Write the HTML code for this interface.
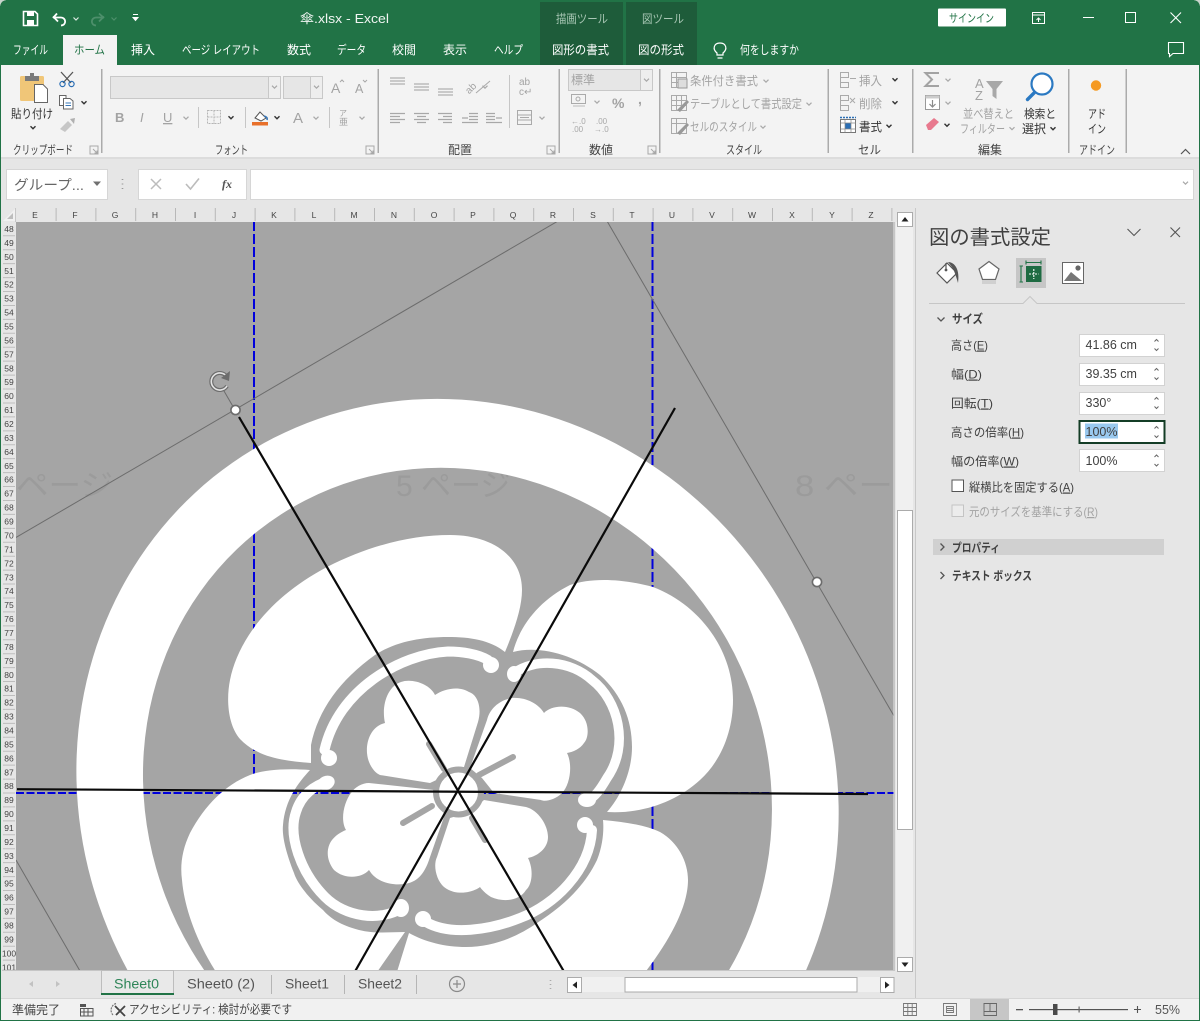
<!DOCTYPE html>
<html lang="ja"><head><meta charset="utf-8"><title>傘.xlsx - Excel</title>
<style>
html,body{margin:0;padding:0;background:#e6e6e6;width:1200px;height:1021px;overflow:hidden}
svg{display:block;font-family:"Liberation Sans","Noto Sans CJK JP",sans-serif}
.tw{fill:#fff;font-size:12px}
.td{fill:#333;font-size:12px}
.tg{fill:#a3a3a3;font-size:12px}
.gl{fill:#444;font-size:12px}
.hd{fill:#444;font-size:8.5px}
.pn{fill:#404040;font-size:12px}
.st{fill:#555;font-size:13px}
.ln{fill:none;stroke:#a8a8a8;stroke-width:1.3}
.ld{fill:none;stroke:#555;stroke-width:1.3}
</style></head><body>
<svg width="1200" height="1021" viewBox="0 0 1200 1021" xmlns="http://www.w3.org/2000/svg">
<defs>
<path id="vg" d="M-2.5,-1.3 L0,1.2 L2.5,-1.3" fill="none" stroke="#a8a8a8" stroke-width="1.2"/>
<path id="vd" d="M-2.5,-1.3 L0,1.2 L2.5,-1.3" fill="none" stroke="#333" stroke-width="1.4"/>
<path id="sp" d="M-2,-3.5 L0,-5.5 L2,-3.5 M-2,3.5 L0,5.5 L2,3.5" fill="none" stroke="#666" stroke-width="1"/>
<path id="lnc" d="M0,0 L15,0 M0,3 L15,3 M0,6 L15,6" fill="none" stroke="#b0b0b0" stroke-width="1.2"/>
<clipPath id="cv"><rect x="16" y="222" width="877.5" height="748"/></clipPath>
<path id="dl" d="M0,0 H8 V8 H0 Z M3,3 L7,7 M7,4.5 V7 H4.5" fill="none" stroke="#a8a8a8" stroke-width="1"/>
</defs>

<!-- window -->
<rect width="1200" height="1021" fill="#217346"/>
<rect x="0" y="0" width="6" height="6" fill="#c8d4cc"/><path d="M0,8 Q0,0 8,0 H12 V12 H0 Z" fill="#217346"/>
<rect x="1194" y="0" width="6" height="6" fill="#c8d4cc"/><path d="M1200,8 Q1200,0 1192,0 H1188 V12 H1200 Z" fill="#217346"/>
<rect x="1" y="65" width="1198" height="955" fill="#e6e6e6"/>

<!-- contextual tabs -->
<rect x="540" y="2" width="83" height="63" fill="#1e5c3a"/>
<rect x="626" y="2" width="71" height="63" fill="#1e5c3a"/>
<text x="556" y="23" textLength="52" lengthAdjust="spacingAndGlyphs" style="font-size:12px;fill:#a9c7b5">描画ツール</text>
<text x="642" y="23" textLength="42" lengthAdjust="spacingAndGlyphs" style="font-size:12px;fill:#a9c7b5">図ツール</text>

<!-- QAT -->
<path d="M23.5,11.5 H35 L37.5,14 V25.5 H23.5 Z" fill="none" stroke="#fff" stroke-width="1.6"/>
<rect x="27" y="11.5" width="7" height="4.5" fill="#fff"/><rect x="27" y="20" width="7" height="5" fill="#fff"/>
<path d="M53,18 L57,13.5 M53,17.5 H61 C66,17.5 67,25 61,25.5" fill="none" stroke="#fff" stroke-width="1.8"/>
<path d="M53,16.5 L58,21.5" fill="none" stroke="#fff" stroke-width="1.8"/>
<path d="M73.5,17.5 L76,20 L78.5,17.5" fill="none" stroke="#dbe8e0" stroke-width="1.2"/>
<path d="M104,18 L99,13.5 M104,17.5 H96 C91,17.5 90,25 96,25.5 M104,16.5 L99,21.5" fill="none" stroke="#4d8f6b" stroke-width="1.8"/>
<path d="M111.5,17.5 L114,20 L116.5,17.5" fill="none" stroke="#4d8f6b" stroke-width="1.2"/>
<path d="M133,14.5 H138 M133,17.5 H138 L135.5,20.5 Z" fill="#fff" stroke="#fff" stroke-width="1"/>
<text x="300" y="23" textLength="89" lengthAdjust="spacingAndGlyphs" style="font-size:12.5px;fill:#f0f5f2">傘.xlsx  -  Excel</text>

<!-- window controls -->
<rect x="938" y="8.5" width="68" height="18" rx="1" fill="#fff"/>
<text x="949" y="22" textLength="45" lengthAdjust="spacingAndGlyphs" style="font-size:11.5px;fill:#217346">サインイン</text>
<path d="M1032.5,12.5 H1044.5 V23.5 H1032.5 Z M1032.5,15 H1044.5 M1038.5,22 V18 M1036.5,20 L1038.5,18 L1040.5,20" fill="none" stroke="#fff" stroke-width="1"/>
<rect x="1083" y="17" width="11" height="1" fill="#fff"/>
<rect x="1125.5" y="12.5" width="10" height="10" fill="none" stroke="#fff" stroke-width="1"/>
<path d="M1170.5,12.5 L1181,23 M1181,12.5 L1170.5,23" fill="none" stroke="#fff" stroke-width="1.1"/>

<!-- tab labels -->
<rect x="63" y="35" width="54" height="30" fill="#f3f3f3"/>
<text x="13" y="54" textLength="35" lengthAdjust="spacingAndGlyphs" class="tw">ファイル</text>
<text x="74" y="54" textLength="31" lengthAdjust="spacingAndGlyphs" style="font-size:12px;fill:#217346">ホーム</text>
<text x="131" y="54" textLength="24" lengthAdjust="spacingAndGlyphs" class="tw">挿入</text>
<text x="182" y="54" textLength="78" lengthAdjust="spacingAndGlyphs" class="tw">ページ レイアウト</text>
<text x="287" y="54" textLength="24" lengthAdjust="spacingAndGlyphs" class="tw">数式</text>
<text x="337" y="54" textLength="29" lengthAdjust="spacingAndGlyphs" class="tw">データ</text>
<text x="392" y="54" textLength="24" lengthAdjust="spacingAndGlyphs" class="tw">校閲</text>
<text x="443" y="54" textLength="24" lengthAdjust="spacingAndGlyphs" class="tw">表示</text>
<text x="494" y="54" textLength="29" lengthAdjust="spacingAndGlyphs" class="tw">ヘルプ</text>
<text x="552" y="54" textLength="57" lengthAdjust="spacingAndGlyphs" class="tw">図形の書式</text>
<text x="638" y="54" textLength="46" lengthAdjust="spacingAndGlyphs" class="tw">図の形式</text>
<path d="M717,53 C712,49 714,43 720,43 C726,43 728,49 723,53 V55 H717 Z M717.5,58 H722.5" fill="none" stroke="#fff" stroke-width="1.2"/>
<text x="740" y="54" textLength="59" lengthAdjust="spacingAndGlyphs" class="tw">何をしますか</text>
<path d="M1168.5,42.5 H1183.5 V53.5 H1173 L1169.5,56.5 V53.5 H1168.5 Z" fill="none" stroke="#fff" stroke-width="1.1"/>

<!-- ribbon -->
<rect x="1" y="65" width="1198" height="92" fill="#f3f3f3"/>
<rect x="1" y="157" width="1198" height="2" fill="#dcdcdc"/>
<g fill="#ababab">
<rect x="101" y="69" width="1.5" height="84"/><rect x="377.5" y="69" width="1.5" height="84"/><rect x="558.5" y="69" width="1.5" height="84"/><rect x="659" y="69" width="1.5" height="84"/><rect x="827.5" y="69" width="1.5" height="84"/><rect x="912" y="69" width="1.5" height="84"/><rect x="1068" y="69" width="1.5" height="84"/><rect x="1125.5" y="69" width="1.5" height="84"/>
</g>
<!-- clipboard group -->
<rect x="20" y="76" width="24" height="25" rx="1.5" fill="#f0c678"/>
<rect x="25" y="76" width="14" height="5" fill="#7a7a7a"/><rect x="30" y="73" width="4" height="4" fill="#7a7a7a"/>
<path d="M34.5,84.5 H43 L47.5,89 V102.5 H34.5 Z" fill="#fff" stroke="#666" stroke-width="1"/>
<text x="11" y="118" textLength="42" lengthAdjust="spacingAndGlyphs" class="td">貼り付け</text>
<use href="#vd" x="33" y="127.5"/>
<path d="M61,72 L71,83 M73,72 L63,83" stroke="#555" stroke-width="1.3" fill="none"/>
<circle cx="62.5" cy="84" r="2.6" fill="none" stroke="#2b6fb5" stroke-width="1.2"/><circle cx="71.5" cy="84" r="2.6" fill="none" stroke="#2b6fb5" stroke-width="1.2"/>
<path d="M59.5,95.5 H66 V105.5 H59.5 Z" fill="#fff" stroke="#666"/><path d="M63.5,98.5 H70 L73,101 V109 H63.5 Z" fill="#fff" stroke="#666"/>
<path d="M65.5,103 H71 M65.5,105.5 H71" stroke="#3a78b8"/>
<use href="#vd" x="84" y="102.5"/>
<path d="M60,129 L68,121 L72,125 L65,132 Z" fill="#c6c6c6"/><path d="M70,119 L75,118 L74,124 Z" fill="#b0b0b0"/>
<text x="13" y="154" textLength="60" lengthAdjust="spacingAndGlyphs" class="gl">クリップボード</text>
<use href="#dl" x="90" y="146"/>
<!-- font group -->
<rect x="110.5" y="76.5" width="170" height="22" fill="#e6e6e6" stroke="#c8c8c8"/>
<rect x="268.5" y="76.5" width="12" height="22" fill="#eee" stroke="#c8c8c8"/>
<use href="#vg" x="274.5" y="87"/>
<rect x="283.5" y="76.5" width="39" height="22" fill="#e6e6e6" stroke="#c8c8c8"/>
<rect x="310.5" y="76.5" width="12" height="22" fill="#eee" stroke="#c8c8c8"/>
<use href="#vg" x="316.5" y="87"/>
<g class="tg" style="font-size:13px;fill:#a3a3a3">
<text x="331" y="93" style="font-size:14px">A</text><text x="355" y="93" style="font-size:12.5px">A</text>
<text x="115" y="122" style="font-weight:bold">B</text><text x="140" y="122" style="font-style:italic">I</text><text x="163" y="122" style="text-decoration:underline">U</text>
<text x="293" y="123" style="font-size:15px">A</text>
</g>
<path d="M340,82 L342,80 L344,82 M363,80 L365,82 L367,80" fill="none" stroke="#a8a8a8"/>
<use href="#vg" x="186" y="118"/>
<rect x="198" y="107" width="1" height="21" fill="#c6c6c6"/>
<path d="M207.5,110.5 H220.5 V123.5 H207.5 Z M214,110.5 V123.5 M207.5,117 H220.5" fill="none" stroke="#b5b5b5" stroke-dasharray="2 1"/>
<use href="#vd" x="231" y="117.5"/>
<rect x="245" y="107" width="1" height="21" fill="#c6c6c6"/>
<path d="M255,118 L260,112 L266,118 L261,121 Z" fill="#fff" stroke="#555"/><path d="M264,116 Q268,117 267,120" fill="none" stroke="#3a78b8" stroke-width="1.6"/>
<rect x="252" y="122" width="16" height="3.5" fill="#e8702a"/>
<use href="#vd" x="277" y="117.5"/>
<use href="#vg" x="316" y="118"/>
<rect x="329" y="107" width="1" height="21" fill="#c6c6c6"/>
<text x="339" y="116" style="font-size:8px;fill:#a3a3a3">ア</text><text x="339" y="125" style="font-size:9px;fill:#a3a3a3">亜</text>
<use href="#vg" x="362" y="118"/>
<!-- align group -->
<use href="#lnc" x="390" y="78"/><use href="#lnc" x="414" y="84"/><use href="#lnc" x="438" y="89"/>
<text x="464" y="90" transform="rotate(-45 472 86)" style="font-size:10px;fill:#a3a3a3">ab</text>
<path d="M476,93 L490,81" stroke="#a8a8a8" fill="none"/>
<use href="#vg" x="485" y="87"/>
<rect x="509" y="75" width="1" height="53" fill="#c6c6c6"/>
<text x="519" y="85" style="font-size:10px;fill:#a3a3a3">ab</text><text x="519" y="95" style="font-size:10px;fill:#a3a3a3">c↵</text>
<path d="M390,113.5 H405 M390,116.5 H400 M390,119.5 H405 M390,122.5 H400 M414,113.5 H429 M417,116.5 H426 M414,119.5 H429 M417,122.5 H426 M438,113.5 H452 M443,116.5 H452 M438,119.5 H452 M443,122.5 H452 M469,113.5 H478 M469,116.5 H478 M469,119.5 H478 M462,122.5 H478 M462,118 H468 M486,113.5 H495 M486,116.5 H495 M486,119.5 H495 M486,122.5 H502 M496,118 H502" class="ln"/>
<rect x="517.5" y="110.5" width="14" height="14" fill="none" stroke="#aaa"/><path d="M517.5,115 H531.5 M517.5,120 H531.5 M520,117.5 H529" stroke="#aaa" fill="none"/>
<use href="#vg" x="542" y="118"/>
<text x="448" y="154" textLength="24" lengthAdjust="spacingAndGlyphs" class="gl">配置</text>
<text x="215" y="154" textLength="33" lengthAdjust="spacingAndGlyphs" class="gl">フォント</text>
<use href="#dl" x="366" y="146"/><use href="#dl" x="547" y="146"/>
<!-- number group -->
<rect x="568.5" y="69.5" width="84" height="21" fill="#e6e6e6" stroke="#c8c8c8"/>
<rect x="640.5" y="69.5" width="12" height="21" fill="#eee" stroke="#c8c8c8"/>
<use href="#vg" x="646.5" y="80"/>
<text x="571" y="84" textLength="24" lengthAdjust="spacingAndGlyphs" class="tg">標準</text>
<rect x="571.5" y="94.5" width="14" height="9" fill="none" stroke="#aaa"/><circle cx="578" cy="99" r="2" fill="none" stroke="#aaa"/><path d="M573,106 H585" stroke="#bbb"/>
<use href="#vg" x="597" y="102"/>
<text x="612" y="108" style="font-size:14px;font-weight:bold;fill:#a3a3a3">%</text>
<text x="638" y="104" style="font-size:14px;font-weight:bold;fill:#a3a3a3">,</text>
<text x="571" y="124" style="font-size:8px;fill:#a8a8a8">←.0</text><text x="572" y="132" style="font-size:8px;fill:#a8a8a8">.00</text>
<text x="596" y="124" style="font-size:8px;fill:#a8a8a8">.00</text><text x="594" y="132" style="font-size:8px;fill:#a8a8a8">→.0</text>
<text x="589" y="154" textLength="24" lengthAdjust="spacingAndGlyphs" class="gl">数値</text>
<use href="#dl" x="648" y="146"/>
<!-- styles group -->
<g fill="none" stroke="#aaa">
<rect x="671.5" y="72.5" width="15" height="15"/><path d="M671.5,77.5 H686.5 M671.5,82.5 H680 M676.5,72.5 V87.5"/>
<rect x="671.5" y="95.5" width="15" height="15"/><path d="M671.5,100.5 H686.5 M671.5,105.5 H686.5 M676.5,95.5 V110.5 M681.5,95.5 V110.5"/>
<rect x="671.5" y="118.5" width="15" height="15"/><path d="M671.5,123.5 H686.5 M676.5,118.5 V133.5"/>
</g>
<rect x="678" y="79" width="9" height="9" fill="#ddd" stroke="#999"/>
<path d="M677,110 L687,100 L689,102 L680,112 Z M677,133 L687,123 L689,125 L680,135 Z" fill="#999"/>
<text x="690" y="85" textLength="68" lengthAdjust="spacingAndGlyphs" class="tg">条件付き書式</text><use href="#vg" x="766" y="81"/>
<text x="690" y="108" textLength="112" lengthAdjust="spacingAndGlyphs" class="tg">テーブルとして書式設定</text><use href="#vg" x="809" y="104"/>
<text x="690" y="131" textLength="67" lengthAdjust="spacingAndGlyphs" class="tg">セルのスタイル</text><use href="#vg" x="763" y="127"/>
<text x="726" y="154" textLength="36" lengthAdjust="spacingAndGlyphs" class="gl">スタイル</text>
<!-- cells group -->
<g fill="none" stroke="#aaa">
<path d="M840.5,72.5 H848.5 V77.5 H840.5 Z M840.5,77.5 V87.5 H848.5 V82.5 H840.5 M850,78.5 H856"/>
<path d="M840.5,95.5 H848.5 V100.5 H840.5 Z M840.5,105.5 H848.5 V110.5 H840.5 Z M840.5,100.5 V105.5 M850,98 L855,103 M855,98 L850,103"/>
</g>
<rect x="840.5" y="119.5" width="15" height="13" fill="#fff" stroke="#777"/><path d="M840,117.5 H856" stroke="#2b6fb5" stroke-dasharray="2 1" stroke-width="1.4"/>
<rect x="845" y="123" width="6" height="6" fill="#2b6fb5"/>
<path d="M840.5,123 H856 M840.5,129 H856 M845,119.5 V132.5 M851,119.5 V132.5" stroke="#888" fill="none" stroke-width=".7"/>
<text x="859" y="85" textLength="23" lengthAdjust="spacingAndGlyphs" class="tg">挿入</text><use href="#vd" x="895" y="79.5"/>
<text x="859" y="108" textLength="23" lengthAdjust="spacingAndGlyphs" class="tg">削除</text><use href="#vd" x="895" y="102.5"/>
<text x="859" y="131" textLength="23" lengthAdjust="spacingAndGlyphs" class="td">書式</text><use href="#vd" x="889" y="126"/>
<text x="858" y="154" textLength="23" lengthAdjust="spacingAndGlyphs" class="gl">セル</text>
<!-- editing group -->
<path d="M939,73 H925.5 L932,79.5 L925.5,86 H939" fill="none" stroke="#a3a3a3" stroke-width="2"/>
<use href="#vg" x="948" y="80"/>
<rect x="925.5" y="95.5" width="14" height="14" fill="#fff" stroke="#999"/><rect x="925.5" y="95.5" width="14" height="3" fill="#ccc"/>
<path d="M932.5,100 V107 M929.5,104 L932.5,107 L935.5,104" fill="none" stroke="#8a8a8a" stroke-width="1.2"/>
<use href="#vg" x="948" y="103"/>
<path d="M926,125 L934,118 L939,122 L931,130 L928,130 Z" fill="#e8798e"/>
<use href="#vd" x="947" y="125"/>
<text x="975" y="88" style="font-size:13px;fill:#a3a3a3">A</text><text x="975" y="100" style="font-size:13px;fill:#a3a3a3">Z</text>
<path d="M986,81 H1003 L996.5,89 V99 L992.5,96 V89 Z" fill="#a8a8a8"/>
<text x="963" y="118" textLength="51" lengthAdjust="spacingAndGlyphs" class="tg">並べ替えと</text>
<text x="960" y="133" textLength="45" lengthAdjust="spacingAndGlyphs" class="tg">フィルター</text><use href="#vg" x="1012" y="128.5"/>
<circle cx="1042" cy="84" r="10.5" fill="#fff" stroke="#2b79c2" stroke-width="2.2"/>
<path d="M1034,93 L1027.5,99.5" stroke="#2b79c2" stroke-width="3.4" stroke-linecap="round"/>
<text x="1024" y="118" textLength="32" lengthAdjust="spacingAndGlyphs" class="td">検索と</text>
<text x="1022" y="133" textLength="24" lengthAdjust="spacingAndGlyphs" class="td">選択</text><use href="#vd" x="1053" y="128.5"/>
<text x="978" y="154" textLength="24" lengthAdjust="spacingAndGlyphs" class="gl">編集</text>
<!-- addin -->
<circle cx="1096" cy="85.5" r="5.2" fill="#f59a23"/>
<text x="1088" y="118" textLength="18" lengthAdjust="spacingAndGlyphs" class="td">アド</text>
<text x="1088" y="133" textLength="18" lengthAdjust="spacingAndGlyphs" class="td">イン</text>
<text x="1079" y="154" textLength="36" lengthAdjust="spacingAndGlyphs" class="gl">アドイン</text>
<path d="M1181,154 L1185.5,149.5 L1190,154" fill="none" stroke="#555" stroke-width="1.2"/>

<!-- formula bar -->
<rect x="6.5" y="169.5" width="101" height="30" fill="#fff" stroke="#d6d6d6"/>
<text x="14" y="190" textLength="70" lengthAdjust="spacingAndGlyphs" style="font-size:14px;fill:#666">グループ...</text>
<path d="M93,181.5 H101 L97,186 Z" fill="#707070"/>
<path d="M122.5,179 V180 M122.5,183.5 V184.5 M122.5,188 V189" stroke="#999" stroke-width="1.6"/>
<rect x="138.5" y="169.5" width="108" height="30" fill="#fff" stroke="#d6d6d6"/>
<path d="M151,179 L161,189 M161,179 L151,189" stroke="#bcbcbc" stroke-width="1.5" fill="none"/>
<path d="M186,184 L190.5,189 L199,178.5" stroke="#bcbcbc" stroke-width="1.6" fill="none"/>
<text x="222" y="188" style="font-family:'Liberation Serif',serif;font-style:italic;font-weight:bold;font-size:12px;fill:#555">fx</text>
<rect x="250.5" y="169.5" width="943" height="30" fill="#fff" stroke="#d6d6d6"/>
<use href="#vg" x="1185.5" y="183"/>

<!-- column headers -->
<rect x="2" y="208" width="892" height="14" fill="#e6e6e6"/>
<path d="M15,209 V221 H3 Z" fill="#f1f1f1"/><path d="M13,213 V219 H7 Z" fill="#bdbdbd"/>
<path d="M15.5,208 V222" stroke="#c6c6c6"/>
<line x1="55.6" y1="214.5" x2="894" y2="214.5" stroke="#b8b8b8" stroke-width="13" stroke-dasharray="1 38.8"/>
<g class="hd" text-anchor="middle">
<text x="35" y="218">E</text><text x="75" y="218">F</text><text x="115" y="218">G</text><text x="155" y="218">H</text><text x="195" y="218">I</text><text x="234" y="218">J</text><text x="274" y="218">K</text><text x="314" y="218">L</text><text x="354" y="218">M</text><text x="394" y="218">N</text><text x="434" y="218">O</text><text x="473" y="218">P</text><text x="513" y="218">Q</text><text x="553" y="218">R</text><text x="593" y="218">S</text><text x="632" y="218">T</text><text x="672" y="218">U</text><text x="712" y="218">V</text><text x="752" y="218">W</text><text x="792" y="218">X</text><text x="832" y="218">Y</text><text x="871" y="218">Z</text>
</g>

<!-- row headers -->
<rect x="2" y="222" width="14" height="750" fill="#e6e6e6"/>
<line x1="9" y1="235.3" x2="9" y2="972" stroke="#bdbdbd" stroke-width="12" stroke-dasharray="1 12.93"/>
<g class="hd" text-anchor="middle">
<text x="9" y="232">48</text><text x="9" y="245.9">49</text><text x="9" y="259.9">50</text><text x="9" y="273.8">51</text><text x="9" y="287.7">52</text><text x="9" y="301.7">53</text><text x="9" y="315.6">54</text><text x="9" y="329.5">55</text><text x="9" y="343.4">56</text><text x="9" y="357.4">57</text><text x="9" y="371.3">58</text><text x="9" y="385.2">59</text><text x="9" y="399.2">60</text><text x="9" y="413.1">61</text><text x="9" y="427">62</text><text x="9" y="441">63</text><text x="9" y="454.9">64</text><text x="9" y="468.8">65</text><text x="9" y="482.7">66</text><text x="9" y="496.7">67</text><text x="9" y="510.6">68</text><text x="9" y="524.5">69</text><text x="9" y="538.5">70</text><text x="9" y="552.4">71</text><text x="9" y="566.3">72</text><text x="9" y="580.3">73</text><text x="9" y="594.2">74</text><text x="9" y="608.1">75</text><text x="9" y="622">76</text><text x="9" y="636">77</text><text x="9" y="649.9">78</text><text x="9" y="663.8">79</text><text x="9" y="677.8">80</text><text x="9" y="691.7">81</text><text x="9" y="705.6">82</text><text x="9" y="719.6">83</text><text x="9" y="733.5">84</text><text x="9" y="747.4">85</text><text x="9" y="761.3">86</text><text x="9" y="775.3">87</text><text x="9" y="789.2">88</text><text x="9" y="803.1">89</text><text x="9" y="817.1">90</text><text x="9" y="831">91</text><text x="9" y="844.9">92</text><text x="9" y="858.9">93</text><text x="9" y="872.8">94</text><text x="9" y="886.7">95</text><text x="9" y="900.6">96</text><text x="9" y="914.6">97</text><text x="9" y="928.5">98</text><text x="9" y="942.4">99</text><text x="9" y="956.4">100</text><text x="9" y="970.3">101</text>
</g>

<!-- canvas -->
<g clip-path="url(#cv)">
<rect x="16" y="222" width="878" height="748" fill="#a5a5a5"/>
<g style="font-size:30px;fill:#9b9b9b">
<text x="16" y="496" textLength="97" lengthAdjust="spacingAndGlyphs">ページ</text><text x="396" y="496">5 ページ</text><text x="795" y="496" textLength="98" lengthAdjust="spacingAndGlyphs">8 ペー</text>
</g>
<g fill="none" stroke="#0000dc" stroke-width="2">
<path d="M254,221 V780" stroke-dasharray="10 3"/>
<path d="M652.5,221 V975" stroke-dasharray="10 3"/>
<path d="M16,793 H894" stroke-dasharray="8 2.5"/>
</g>
<!-- ring -->
<path fill="#fff" fill-rule="evenodd" d="M130.2,975 A375,399 -30 1 1 803.9,975 L726.1,975 A309.5,329 -30 1 0 207.6,975 Z"/>
<!-- big petals -->
<g fill="#fff">
<path d="M311,763 C285,761 258,758 240,739 C228,725 226,700 230,680 C238,640 270,597 327,567 C370,545 412,535 450,535 C492,535 522,556 522,590 C522,610 512,635 505,652 C490,640 470,637 448,637 C420,637 395,642 375,655 C340,680 318,710 311,745 Z"/>
<path d="M513,652 C520,625 540,600 570,585 C590,578 620,578 653,587 C700,605 733,650 733,700 C733,730 722,760 700,780 C675,803 640,814 607,812 C622,795 632,770 632,747 C632,720 622,695 600,675 C575,655 540,645 513,652 Z"/>
<path d="M603,820 C625,822 645,825 660,832 C678,842 688,862 688,880 C688,905 672,938 643,975 L396,975 L409,933 C425,942 445,947 466,947 C495,947 520,935 537,923 C565,905 585,885 597,860 C603,845 604,830 603,820 Z"/>
<path d="M310,770 C285,768 262,770 250,775 C225,785 205,805 190,833 C182,850 180,865 182,880 C184,905 195,940 218,975 L375,975 L405,932 C390,932 375,934 359,930 C340,925 330,918 323,910 C305,895 296,880 294,873 C285,850 282,835 283,825 C285,800 298,783 310,770 Z"/>
</g>
<!-- arcs -->
<g fill="none" stroke="#fff" stroke-width="10" stroke-linecap="round">
<path d="M488,660 C478,654 462,651.5 448,651.5 C400,654 338,690 324.5,750"/>
<path d="M514,673 C535,658 570,660 592,680 C618,700 630,745 607,778 C600,790 595,797 587,801" stroke-width="9.5"/>
<path d="M592,830 C590,870 555,905 520,918 C490,930 450,936 426,922"/>
<path d="M402,908 C380,922 345,917 325,897 C300,872 288,835 296,812 C301,795 315,785 327,782"/>
</g>
<g fill="#fff"><circle cx="491" cy="665" r="8"/><circle cx="329" cy="758" r="8"/><ellipse cx="514" cy="674" rx="7" ry="8"/><ellipse cx="587" cy="800" rx="9" ry="7"/><circle cx="585" cy="825" r="8"/><circle cx="423" cy="919" r="8"/><ellipse cx="401" cy="908" rx="8" ry="9"/><ellipse cx="326" cy="783" rx="9" ry="7" transform="rotate(-25 326 783)"/></g>
<!-- flower -->
<g fill="#fff">
<path d="M464,767 L478,722 C482,708 478,695 469,692 C460,686 445,688 435,695 C430,684 412,678 401,682 C388,686 381,705 385,723 C372,726 366,740 367,753 C368,765 375,773 380,775 L430,783 L445,776 Z"/>
<path d="M470,768 L487,720 C490,708 500,700 512,698 C525,697 538,703 544,713 C550,706 568,703 580,713 C590,722 589,738 584,743 C580,749 573,752 567,753 C573,765 570,785 562,793 C555,800 545,802 541,800 L494,793 L482,778 Z"/>
<path d="M484,800 L526,807 C538,810 548,825 548,837 C548,848 538,856 528,858 C534,870 532,885 526,890 C520,900 505,903 491,897 C486,894 482,890 480,887 C472,893 455,896 444,887 C436,880 433,865 437,857 L450,818 L470,812 Z"/>
<path d="M444,817 L430,857 C426,870 420,880 409,883 C398,886 378,885 369,870 C362,878 345,880 334,870 C326,860 326,848 332,840 C336,835 341,832 346,830 C340,820 344,802 351,793 C355,787 362,783 369,783 L434,790 L445,805 Z"/>
</g>
<g fill="none" stroke="#a5a5a5" stroke-width="6" stroke-linecap="round">
<path d="M429,744 L444,769"/><path d="M479,775 L513,757"/><path d="M472,818 L485,840"/><path d="M403,823 L432,806"/>
</g>
<circle cx="458.5" cy="792" r="22.5" fill="#fff" stroke="#a5a5a5" stroke-width="6"/>
<!-- black lines -->
<g fill="none" stroke="#0a0a0a" stroke-width="2.2">
<path d="M239,417 L566,975"/><path d="M675,408 L353,975"/><path d="M17,789.2 L868,794"/>
</g>
<!-- selection -->
<g fill="none" stroke="#6c6c6c" stroke-width="1">
<path d="M16,537.5 L558,221"/><path d="M607,221 L894,716"/><path d="M16,860 L80,971"/><path d="M235,410 L224,391"/>
</g>
<circle cx="235.5" cy="410" r="4.6" fill="#fff" stroke="#6c6c6c" stroke-width="1.6"/>
<circle cx="817" cy="582" r="4.6" fill="#fff" stroke="#6c6c6c" stroke-width="1.6"/>
<path d="M227,377 A8.5,8.5 0 1 0 227,386" fill="none" stroke="#6c6c6c" stroke-width="4"/>
<path d="M227,377 A8.5,8.5 0 1 0 227,386" fill="none" stroke="#e4e4e4" stroke-width="1.6"/>
<path d="M230,371 L229,381 L221,378 Z" fill="#6c6c6c"/>
</g>

<!-- vertical scrollbar -->
<rect x="894" y="208" width="21" height="790" fill="#e6e6e6"/>
<rect x="896" y="222" width="17" height="749" fill="#f0f0f0"/>
<rect x="894" y="222" width="1" height="749" fill="#c6c6c6"/>
<rect x="897.5" y="212.5" width="15" height="14" fill="#fff" stroke="#ababab"/>
<path d="M901.5,221.5 H908.5 L905,217 Z" fill="#222"/>
<rect x="897.5" y="510.5" width="15" height="319" fill="#fff" stroke="#ababab"/>
<rect x="897.5" y="957.5" width="15" height="14" fill="#fff" stroke="#ababab"/>
<path d="M901.5,962.5 H908.5 L905,967 Z" fill="#222"/>
<rect x="915" y="208" width="1" height="790" fill="#c8c8c8"/>

<!-- task pane -->
<text x="929" y="244" textLength="122" lengthAdjust="spacingAndGlyphs" style="font-size:20px;fill:#404040">図の書式設定</text>
<path d="M1127.5,229 L1134,235.5 L1140.5,229" fill="none" stroke="#555" stroke-width="1.1"/>
<path d="M1170.5,227.5 L1180,237 M1180,227.5 L1170.5,237" fill="none" stroke="#555" stroke-width="1.1"/>
<!-- pane icons -->
<path d="M937,273 L947,263 L957,273 L947,283 Z" fill="#fff" stroke="#555" stroke-width="1.2"/>
<path d="M946,263 V269" stroke="#555" stroke-width="1.2"/><circle cx="946" cy="270" r="1.4" fill="#555"/>
<path d="M948,262 C955,262 960,270 958,283 C956,276 954,270 952,267 Z" fill="#555"/>
<path d="M989,261.5 L999,269 L995.5,279.5 H982.5 L979,269 Z" fill="#fff" stroke="#666" stroke-width="1.2"/>
<path d="M982,280 H996 V284 H982 Z" fill="#d0d0d0"/>
<rect x="1016" y="258" width="30" height="30" fill="#c6c6c6"/>
<path d="M1026,262.5 H1041 M1026,260.5 V264.5 M1041,260.5 V264.5 M1019.5,266 H1023 M1021,266 V282 M1019.5,282 H1023" fill="none" stroke="#217346" stroke-width="1.1"/>
<rect x="1026" y="266" width="15.5" height="16" fill="#1e6b42"/>
<path d="M1033.8,269 V279 M1029,274 H1038.5" stroke="#fff" stroke-width="1.1" fill="none" stroke-dasharray="2 1"/>
<rect x="1062.5" y="262.5" width="21" height="21" fill="#fff" stroke="#666"/>
<circle cx="1078" cy="268" r="2.6" fill="#666"/>
<path d="M1064,281 L1071,272 L1077,277 L1082,281 Z" fill="#777"/>
<path d="M929,303.5 H1023 L1030,296.5 L1037,303.5 H1185" fill="none" stroke="#c6c6c6" stroke-width="1"/>
<!-- size section -->
<path d="M937.5,317.5 L941,321 L944.5,317.5" class="ld"/>
<text x="952" y="323" textLength="31" lengthAdjust="spacingAndGlyphs" style="font-size:12px;font-weight:bold;fill:#404040">サイズ</text>
<text x="951" y="349.5" textLength="37" lengthAdjust="spacingAndGlyphs" class="pn">高さ(<tspan text-decoration="underline">E</tspan>)</text>
<text x="951" y="378.5" textLength="31" lengthAdjust="spacingAndGlyphs" class="pn">幅(<tspan text-decoration="underline">D</tspan>)</text>
<text x="951" y="407.5" textLength="42" lengthAdjust="spacingAndGlyphs" class="pn">回転(<tspan text-decoration="underline">T</tspan>)</text>
<text x="951" y="436.5" textLength="73" lengthAdjust="spacingAndGlyphs" class="pn">高さの倍率(<tspan text-decoration="underline">H</tspan>)</text>
<text x="951" y="465.5" textLength="68" lengthAdjust="spacingAndGlyphs" class="pn">幅の倍率(<tspan text-decoration="underline">W</tspan>)</text>
<g fill="#fff" stroke="#d2d2d2"><rect x="1079.5" y="334.5" width="85" height="22"/><rect x="1079.5" y="363.5" width="85" height="22"/><rect x="1079.5" y="392.5" width="85" height="22"/><rect x="1079.5" y="449.5" width="85" height="22"/></g>
<rect x="1079.5" y="421" width="85" height="22" fill="#fff" stroke="#143d26" stroke-width="2"/>
<rect x="1085" y="423.5" width="33" height="15" fill="#99c9ef"/>
<g style="font-size:12.5px;fill:#404040">
<text x="1085.5" y="349">41.86 cm</text><text x="1085.5" y="378">39.35 cm</text><text x="1085.5" y="407">330°</text><text x="1085.5" y="436">100%</text><text x="1085.5" y="465">100%</text>
</g>
<use href="#sp" x="1156.5" y="345"/><use href="#sp" x="1156.5" y="374"/><use href="#sp" x="1156.5" y="403"/><use href="#sp" x="1156.5" y="432"/><use href="#sp" x="1156.5" y="460.5"/>
<rect x="952" y="480" width="11.5" height="11.5" fill="#fff" stroke="#555"/>
<text x="969" y="491.5" textLength="105" lengthAdjust="spacingAndGlyphs" class="pn">縦横比を固定する(<tspan text-decoration="underline">A</tspan>)</text>
<rect x="952" y="505" width="11.5" height="11.5" fill="#ececec" stroke="#c4c4c4"/>
<text x="969" y="516" textLength="129" lengthAdjust="spacingAndGlyphs" class="tg">元のサイズを基準にする(<tspan text-decoration="underline">R</tspan>)</text>
<rect x="933" y="539" width="231" height="16" fill="#d0d0d0"/>
<path d="M940.5,543.5 L944,547 L940.5,550.5" class="ld"/>
<text x="952" y="552" textLength="48" lengthAdjust="spacingAndGlyphs" style="font-size:12px;font-weight:bold;fill:#404040">プロパティ</text>
<path d="M940.5,572 L944,575.5 L940.5,579" class="ld"/>
<text x="952" y="580" textLength="80" lengthAdjust="spacingAndGlyphs" style="font-size:12px;font-weight:bold;fill:#404040">テキスト ボックス</text>

<!-- sheet tabs -->
<rect x="2" y="970" width="892" height="28" fill="#e6e6e6"/>
<rect x="2" y="970" width="892" height="1" fill="#c6c6c6"/>
<rect x="101" y="970" width="73" height="24" fill="#e9e9e9"/>
<path d="M101.5,994 V970.5 H173.5 V994" fill="none" stroke="#bdbdbd"/>
<rect x="101" y="993" width="73" height="2" fill="#217346"/>
<path d="M33,981 L29,984 L33,987 Z M56,981 L60,984 L56,987 Z" fill="#c2c2c2"/>
<text x="114" y="988.5" textLength="45" lengthAdjust="spacingAndGlyphs" style="font-size:14px;fill:#2e8558">Sheet0</text>
<text x="187" y="988.5" textLength="68" lengthAdjust="spacingAndGlyphs" style="font-size:14px;fill:#555">Sheet0 (2)</text>
<text x="285" y="988.5" textLength="44" lengthAdjust="spacingAndGlyphs" style="font-size:14px;fill:#555">Sheet1</text>
<text x="358" y="988.5" textLength="44" lengthAdjust="spacingAndGlyphs" style="font-size:14px;fill:#555">Sheet2</text>
<path d="M271.5,975 V994 M344.5,975 V994 M416.5,975 V994" stroke="#b5b5b5"/>
<circle cx="457" cy="984" r="7.5" fill="none" stroke="#8a8a8a" stroke-width="1.2"/>
<path d="M453,984 H461 M457,980 V988" stroke="#8a8a8a" stroke-width="1.2"/>
<path d="M550.5,980 V981 M550.5,984 V985 M550.5,988 V989" stroke="#aaa" stroke-width="1.6"/>
<rect x="582" y="977" width="298" height="15" fill="#f0f0f0"/>
<rect x="567.5" y="977.5" width="14" height="15" fill="#fff" stroke="#ababab"/>
<path d="M577,981.5 L572.5,985 L577,988.5 Z" fill="#222"/>
<rect x="625" y="977.5" width="232" height="14.5" fill="#fff" stroke="#ababab"/>
<rect x="880.5" y="977.5" width="13.5" height="15" fill="#fff" stroke="#ababab"/>
<path d="M885,981.5 L889.5,985 L885,988.5 Z" fill="#222"/>

<!-- status bar -->
<rect x="1" y="998" width="1198" height="22" fill="#f1f1f1"/>
<rect x="1" y="998" width="1198" height="1" fill="#d6d6d6"/>
<text x="12" y="1014" textLength="48" lengthAdjust="spacingAndGlyphs" style="font-size:12px;fill:#444">準備完了</text>
<rect x="80" y="1004" width="6" height="3" fill="#555"/>
<path d="M80.5,1008.5 H93 V1016 H80.5 Z M84,1008.5 V1016 M88,1008.5 V1016 M80.5,1012 H93" fill="none" stroke="#555"/>
<path d="M116,1003.5 A7,7 0 0 0 113,1015" fill="none" stroke="#777" stroke-dasharray="2 1" stroke-width="1.2"/>
<path d="M115,1006 L125,1016 M125,1006 L116,1015" stroke="#444" stroke-width="1.8" fill="none"/>
<text x="129" y="1013.5" textLength="163" lengthAdjust="spacingAndGlyphs" style="font-size:12px;fill:#444">アクセシビリティ: 検討が必要です</text>
<path d="M903.5,1003.5 H916.5 V1015.5 H903.5 Z M907.8,1003.5 V1015.5 M912.2,1003.5 V1015.5 M903.5,1007.5 H916.5 M903.5,1011.5 H916.5" fill="none" stroke="#777" stroke-width=".9"/>
<path d="M943.5,1003.5 H956.5 V1015.5 H943.5 Z M946.5,1006.5 H953.5 V1012.5 H946.5 Z M947,1008.5 H953 M947,1010.5 H953" fill="none" stroke="#777" stroke-width=".9"/>
<rect x="970" y="999" width="39" height="21" fill="#c6c6c6"/>
<path d="M984,1003.5 H996.5 V1015.5 H984 Z M984,1011.5 H996.5 M990,1003.5 V1011.5" fill="none" stroke="#666" stroke-width=".9"/>
<rect x="1016" y="1009" width="7" height="1.3" fill="#555"/>
<rect x="1029" y="1009" width="99" height="1.2" fill="#555"/>
<rect x="1053" y="1004" width="4.5" height="11" fill="#4a4a4a"/>
<rect x="1078.5" y="1006.5" width="1.2" height="6" fill="#666"/>
<path d="M1134,1009.5 H1141 M1137.5,1006 V1013" stroke="#555" stroke-width="1.1"/>
<text x="1155" y="1014" textLength="25" lengthAdjust="spacingAndGlyphs" style="font-size:12.5px;fill:#555">55%</text>
<rect x="0" y="1020" width="1200" height="1" fill="#217346"/>
</svg>
</body></html>
